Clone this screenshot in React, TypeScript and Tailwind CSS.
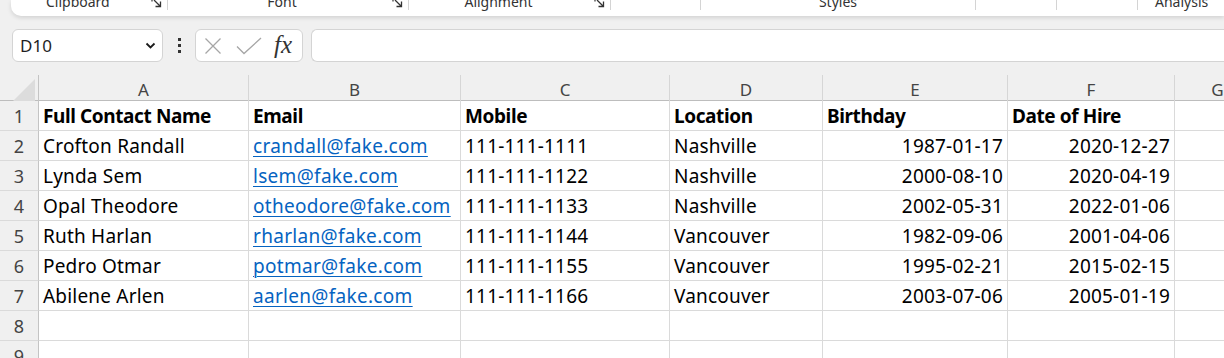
import React from "react";

const cols = ["A", "B", "C", "D", "E", "F", "G"];

type Row = { name: string; email: string; mobile: string; loc: string; bday: string; hire: string };

const rows: Row[] = [
  { name: "Crofton Randall", email: "crandall@fake.com", mobile: "111-111-1111", loc: "Nashville", bday: "1987-01-17", hire: "2020-12-27" },
  { name: "Lynda Sem", email: "lsem@fake.com", mobile: "111-111-1122", loc: "Nashville", bday: "2000-08-10", hire: "2020-04-19" },
  { name: "Opal Theodore", email: "otheodore@fake.com", mobile: "111-111-1133", loc: "Nashville", bday: "2002-05-31", hire: "2022-01-06" },
  { name: "Ruth Harlan", email: "rharlan@fake.com", mobile: "111-111-1144", loc: "Vancouver", bday: "1982-09-06", hire: "2001-04-06" },
  { name: "Pedro Otmar", email: "potmar@fake.com", mobile: "111-111-1155", loc: "Vancouver", bday: "1995-02-21", hire: "2015-02-15" },
  { name: "Abilene Arlen", email: "aarlen@fake.com", mobile: "111-111-1166", loc: "Vancouver", bday: "2003-07-06", hire: "2005-01-19" },
];

const gridCols = "grid w-[1300px] grid-cols-[39px_210px_212px_209px_153px_185px_167px_86px_1fr]";

function Launcher() {
  return (
    <svg width="11" height="11" viewBox="0 0 11 11" className="text-[#333]">
      <path d="M1 1h3.5M1 1v3.5" stroke="currentColor" strokeWidth="1.2" fill="none" />
      <path d="M3 3L9.5 9.5M4.5 9.5h5v-5" stroke="currentColor" strokeWidth="1.3" fill="none" />
    </svg>
  );
}

function Sep() {
  return <div className="w-px h-[10px] bg-[#d4d4d4] self-start" />;
}

function Ribbon() {
  return (
    <div className="ml-[11px] h-[16px] bg-white rounded-bl-[10px] shadow-[0_2px_4px_rgba(0,0,0,0.12)] flex overflow-hidden font-['Noto_Sans',sans-serif] text-[14px] text-[#333] leading-[16px] relative z-10">
      <div className="w-[156px] flex items-start">
        <div className="flex-1 mt-[-6px] pl-[35px]">Clipboard</div>
        <div className="mt-[-3px] mr-[5px]"><Launcher /></div>
      </div>
      <Sep />
      <div className="w-[240px] flex items-start">
        <div className="flex-1 mt-[-6px] text-center pl-[4px]">Font</div>
        <div className="mt-[-3px] mr-[5px]"><Launcher /></div>
      </div>
      <Sep />
      <div className="w-[201px] flex items-start">
        <div className="flex-1 mt-[-6px] text-center pr-[6px]">Alignment</div>
        <div className="mt-[-3px] mr-[5px]"><Launcher /></div>
      </div>
      <Sep />
      <div className="w-[89px]" />
      <Sep />
      <div className="w-[274px] flex items-start">
        <div className="flex-1 mt-[-6px] text-center">Styles</div>
      </div>
      <Sep />
      <div className="w-[80px]" />
      <Sep />
      <div className="w-[80px]" />
      <Sep />
      <div className="flex-1 flex items-start">
        <div className="mt-[-6px] pl-[17px]">Analysis</div>
      </div>
    </div>
  );
}

function FormulaBar() {
  return (
    <div className="mt-[13px] h-[33px] flex items-stretch font-['Noto_Sans',sans-serif]">
      <div className="ml-[12px] w-[151px] bg-white border border-[#d4d4d4] rounded-[6px] flex items-center justify-between pl-[7px] pr-[6px]">
        <span className="text-[17px] text-[#1f1f1f]">D10</span>
        <svg width="11" height="8" viewBox="0 0 11 8">
          <path d="M1.5 1.5l4 4 4-4" stroke="#1a1a1a" strokeWidth="1.8" fill="none" />
        </svg>
      </div>
      <div className="w-[32px] flex flex-col items-center justify-center gap-[3px]">
        <div className="w-[3px] h-[3px] bg-[#333]" />
        <div className="w-[3px] h-[3px] bg-[#333]" />
        <div className="w-[3px] h-[3px] bg-[#333]" />
      </div>
      <div className="w-[108px] bg-white border border-[#d4d4d4] rounded-[6px] flex items-center pl-[8px]">
        <svg width="18" height="18" viewBox="0 0 18 18">
          <path d="M1.5 1.5l15 15M16.5 1.5l-15 15" stroke="#a6a6a6" strokeWidth="1.3" fill="none" />
        </svg>
        <svg width="26" height="18" viewBox="0 0 26 18" className="ml-[14px]">
          <path d="M1 9.5l7 7L25 1" stroke="#a6a6a6" strokeWidth="1.3" fill="none" />
        </svg>
        <span className="ml-[12px] font-['Liberation_Serif',serif] italic text-[25px] leading-none text-[#333] mt-[-2px]">fx</span>
      </div>
      <div className="ml-[8px] flex-1 bg-white border border-[#d4d4d4] border-r-0 rounded-l-[6px]" />
    </div>
  );
}

function Cell({ children, right, bold, link }: { children?: React.ReactNode; right?: boolean; bold?: boolean; link?: boolean }) {
  return (
    <div
      className={
        "h-[30px] border-r border-b border-[#dadada] bg-white flex items-end pb-[2px] overflow-visible whitespace-nowrap " +
        (right ? "justify-end pr-[4px] " : "pl-[4px] ") +
        (bold ? "font-bold tracking-[-0.4px] " : link ? "tracking-[0.3px] " : "tracking-[0.2px] ") +
        (link ? "text-[#0563c1] " : "text-black ")
      }
    >
      {link ? <span className="underline decoration-1 underline-offset-[3px]">{children}</span> : children}
    </div>
  );
}

function RowHeader({ n }: { n: number }) {
  return (
    <div className="h-[30px] border-r border-b border-r-[#c4c4c4] border-b-[#dadada] bg-[#f0f0f0] flex items-center justify-center text-[18px] text-[#444] font-['Noto_Sans',sans-serif]">
      {n}
    </div>
  );
}

export default function App() {
  return (
    <div className="w-[1224px] h-[358px] overflow-hidden bg-[#f0f0f0]">
      <Ribbon />
      <FormulaBar />
      <div className="mt-[13px]">
        <div className={gridCols + " h-[26px] border-b border-[#bdbdbd] font-['Noto_Sans',sans-serif] text-[17px] text-[#444]"}>
          <div className="border-r border-[#c4c4c4] flex items-end justify-end pr-[3px] pb-[2px]">
            <svg width="22" height="22" viewBox="0 0 22 22">
              <path d="M22 0L22 22L0 22Z" fill="#dcdcdc" />
            </svg>
          </div>
          {cols.map((c) => (
            <div key={c} className="flex items-center justify-center border-r border-[#d6d6d6]">
              <span className="mt-[2px]">{c}</span>
            </div>
          ))}
          <div />
        </div>
        <div className={gridCols + " font-['Noto_Sans',sans-serif] text-[19px] leading-[24px]"}>
          <RowHeader n={1} />
          <Cell bold>Full Contact Name</Cell>
          <Cell bold>Email</Cell>
          <Cell bold>Mobile</Cell>
          <Cell bold>Location</Cell>
          <Cell bold>Birthday</Cell>
          <Cell bold>Date of Hire</Cell>
          <Cell />
          <Cell />
          {rows.map((r, i) => (
            <React.Fragment key={i}>
              <RowHeader n={i + 2} />
              <Cell>{r.name}</Cell>
              <Cell link>{r.email}</Cell>
              <Cell>{r.mobile}</Cell>
              <Cell>{r.loc}</Cell>
              <Cell right>{r.bday}</Cell>
              <Cell right>{r.hire}</Cell>
              <Cell />
              <Cell />
            </React.Fragment>
          ))}
          {[8, 9].map((n) => (
            <React.Fragment key={n}>
              <RowHeader n={n} />
              <Cell />
              <Cell />
              <Cell />
              <Cell />
              <Cell />
              <Cell />
              <Cell />
              <Cell />
            </React.Fragment>
          ))}
        </div>
      </div>
    </div>
  );
}
